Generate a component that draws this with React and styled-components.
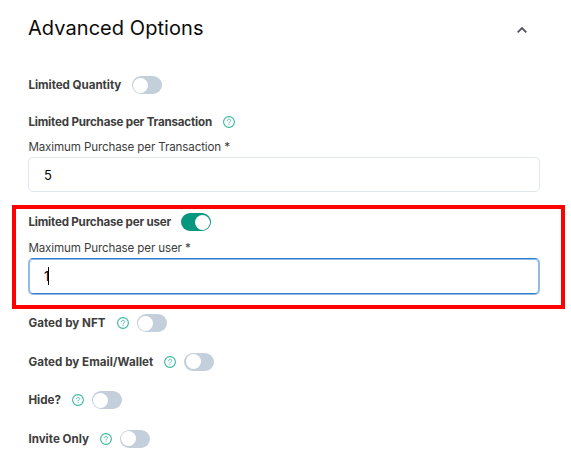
import React from "react";
import styled, { createGlobalStyle } from "styled-components";

const GlobalStyle = createGlobalStyle`
  * { box-sizing: border-box; }
  body { margin: 0; background: #fff; font-family: Inter, "Liberation Sans", sans-serif; }
`;

const Panel = styled.section`
  width: 571px;
  height: 476px;
  overflow: hidden;
  background: #fff;
  color: #3d3d3d;
`;

const Header = styled.header`
  display: flex;
  align-items: center;
  justify-content: space-between;
  height: 28px;
  margin: 14px 43px 34px 28px;
`;

const Title = styled.h2`
  margin: 0;
  color: #0b0b0b;
  font-size: 20px;
  font-weight: 400;
  line-height: 28px;
  white-space: nowrap;
  letter-spacing: ${(p) => p.$tracking}px;
`;

const Chevron = styled.svg`
  display: block;
  width: 12px;
  height: 8px;
  margin-top: 4px;
`;

const Group = styled.div`
  padding: 0 31.4px 0 28.4px;
`;

const Highlight = styled.div`
  height: 104px;
  margin: 13px 6px 5px 12px;
  padding: 4px 21.4px 0 12.4px;
  border: 4px solid #ff0000;
`;

const Row = styled.div`
  display: flex;
  align-items: center;
  height: 18px;
  margin-bottom: ${(p) => p.$after ?? 0}px;
`;

const Label = styled.span`
  flex: none;
  width: ${(p) => p.$width}px;
  color: #3d3d3d;
  font-size: 11.6px;
  font-weight: 700;
  line-height: 18px;
  white-space: nowrap;
  letter-spacing: ${(p) => p.$tracking}px;
`;

const FieldLabel = styled.label`
  display: block;
  font-size: 11.6px;
  line-height: 16px;
  margin-bottom: ${(p) => p.$after}px;
  white-space: nowrap;
  letter-spacing: ${(p) => p.$tracking}px;
`;

const Field = styled.div`
  display: flex;
  align-items: center;
  height: 35px;
  padding-left: 14.5px;
  border: 1px solid #e0e6ee;
  border-radius: 5px;
  color: #080808;
  font-size: 13px;
`;

const FocusedField = styled(Field)`
  height: 36px;
  padding-left: 13.5px;
  border-style: solid;
  border-width: 1px 2px;
  border-color: #2f80cf #8fb9e6;
  box-shadow: inset 0 1px #8fb9e6, 0 1px #8fb9e6;
`;

const Caret = styled.i`
  width: 1px;
  height: 18px;
  margin-left: -1px;
  background: #000;
`;

const Track = styled.span`
  display: flex;
  flex: none;
  align-items: center;
  justify-content: ${(p) => (p.$on ? "flex-end" : "flex-start")};
  width: 30px;
  height: 18px;
  padding: 1.5px;
  border-radius: 9px;
  background: ${(p) => (p.$on ? "#07967f" : "#c3cfdb")};
`;

const Thumb = styled.span`
  width: 15px;
  height: 15px;
  border-radius: 50%;
  background: #fff;
`;

const HelpSvg = styled.svg`
  flex: none;
  width: 12px;
  height: 12px;
  margin-right: 8px;
`;

const Toggle = ({ on }) => (
  <Track $on={on} role="switch" aria-checked={!!on}>
    <Thumb />
  </Track>
);

const Help = () => (
  <HelpSvg viewBox="0 0 12 12" fill="none" stroke="#37b5a0" strokeLinecap="round">
    <circle cx="6" cy="6" r="5.4" strokeWidth="1.1" />
    <path d="M4.5 4.8C4.5 3.8 5.1 3.3 6 3.3s1.6.5 1.6 1.4C7.6 5.7 6 5.8 6 7" strokeWidth=".85" />
    <path d="M6 8.6v.1" strokeWidth="1" />
  </HelpSvg>
);

const gates = [
  { text: "Gated by NFT", width: 88.5, tracking: 0.04 },
  { text: "Gated by Email/Wallet", width: 135.9, tracking: 0.04 },
  { text: "Hide?", width: 43.3, tracking: 0 },
  { text: "Invite Only", width: 71.3, tracking: 0 },
];

export default function App() {
  return (
    <Panel>
      <GlobalStyle />
      <Header>
        <Title $tracking={0.06}>Advanced Options</Title>
        <Chevron viewBox="0 0 12 8" fill="none">
          <path d="M1.7 6.3 6 2l4.3 4.3" stroke="#52525f" strokeWidth="1.8" />
        </Chevron>
      </Header>
      <Group>
        <Row $after={19}>
          <Label $width={103.6} $tracking={-0.04}>Limited Quantity</Label>
          <Toggle />
        </Row>
        <Row $after={8}>
          <Label $width={194.6} $tracking={-0.19}>Limited Purchase per Transaction</Label>
          <Help />
        </Row>
        <FieldLabel $after={2} $tracking={-0.13}>Maximum Purchase per Transaction *</FieldLabel>
        <Field>5</Field>
      </Group>
      <Highlight>
        <Row $after={9}>
          <Label $width={153} $tracking={-0.2}>Limited Purchase per user</Label>
          <Toggle on />
        </Row>
        <FieldLabel $after={1.5} $tracking={-0.13}>Maximum Purchase per user *</FieldLabel>
        <FocusedField>
          1<Caret />
        </FocusedField>
      </Highlight>
      <Group>
        {gates.map((g) => (
          <Row key={g.text} $after={20.6}>
            <Label $width={g.width} $tracking={g.tracking}>{g.text}</Label>
            <Help />
            <Toggle />
          </Row>
        ))}
      </Group>
    </Panel>
  );
}
